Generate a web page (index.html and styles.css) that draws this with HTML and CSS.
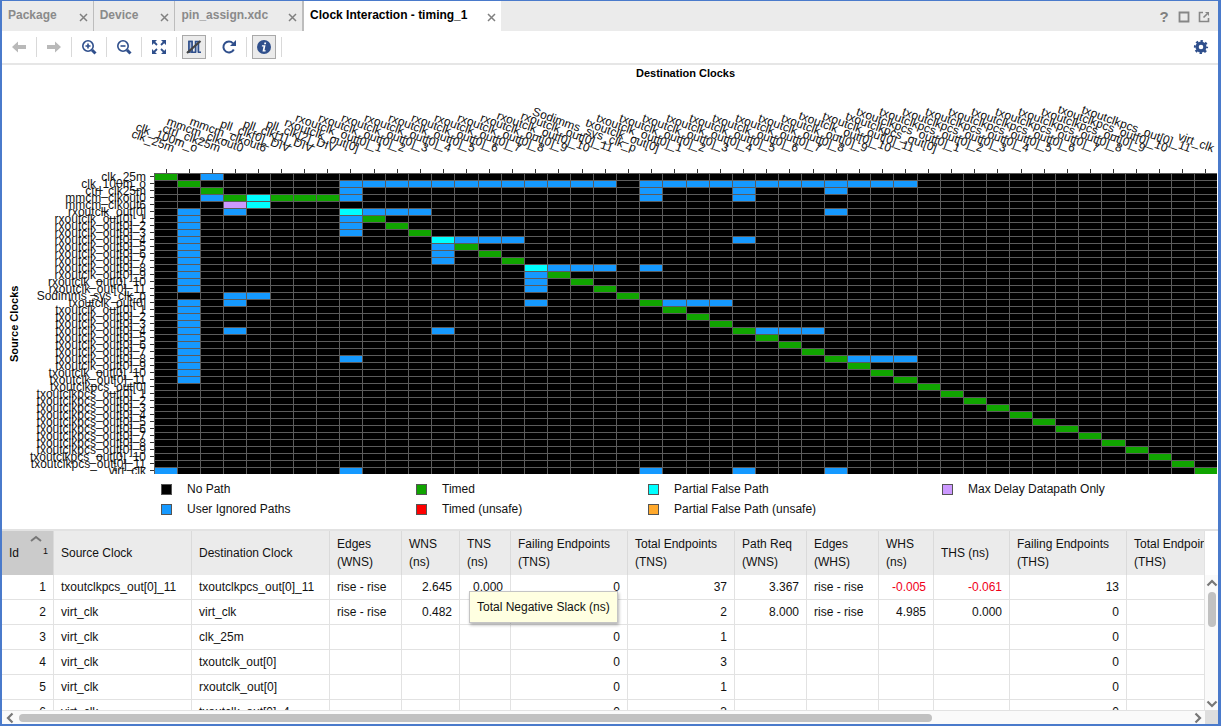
FILE: index.html
```html
<!DOCTYPE html>
<html lang="en">
<head>
<meta charset="utf-8">
<title>Clock Interaction - timing_1</title>
<link rel="stylesheet" href="styles.css">
</head>
<body>
<div class="app">
  <header class="tabbar">
    <nav class="tabs" aria-label="Views">
      <div class="tab"><button class="tab-name">Package</button><button class="tab-close" aria-label="Close Package"><svg viewBox="0 0 9 9"><path d="M1 1l7 7M8 1l-7 7"/></svg></button></div>
      <div class="tab"><button class="tab-name">Device</button><button class="tab-close" aria-label="Close Device"><svg viewBox="0 0 9 9"><path d="M1 1l7 7M8 1l-7 7"/></svg></button></div>
      <div class="tab"><button class="tab-name">pin_assign.xdc</button><button class="tab-close" aria-label="Close pin_assign.xdc"><svg viewBox="0 0 9 9"><path d="M1 1l7 7M8 1l-7 7"/></svg></button></div>
      <div class="tab tab-active"><button class="tab-name">Clock Interaction - timing_1</button><button class="tab-close" aria-label="Close Clock Interaction"><svg viewBox="0 0 9 9"><path d="M1 1l7 7M8 1l-7 7"/></svg></button></div>
    </nav>
    <div class="window-actions">
      <button class="help" aria-label="Help">?</button>
      <button aria-label="Maximize"><svg width="12" height="12" viewBox="0 0 12 12" fill="none" stroke="#868686" stroke-width="1.8"><path d="M1.500 1.500h9v9h-9z"/></svg></button>
      <button aria-label="Float"><svg width="12" height="12" viewBox="0 0 12 12" fill="none" stroke="#868686" stroke-width="1.6"><path d="M5 1.500H1.500v9h9V7M5.500 6.500L9 3"/><path d="M7 1h4v4z" fill="#868686" stroke="none"/></svg></button>
    </div>
  </header>

  <div class="toolbar" role="toolbar">
    <button class="tool" aria-label="Previous"><svg viewBox="0 0 24 24" fill="#b9b9b9"><path d="M5 12l6-5.500V10h8v4h-8v3.500z"/></svg></button>
    <span class="sep"></span>
    <button class="tool" aria-label="Next"><svg viewBox="0 0 24 24" fill="#b9b9b9"><path d="M19 12l-6-5.500V10H5v4h8v3.500z"/></svg></button>
    <span class="sep"></span>
    <button class="tool" aria-label="Zoom in"><svg viewBox="0 0 24 24" fill="none" stroke="#2f4f8c" stroke-width="1.6"><circle cx="11" cy="11" r="5.200"/><path d="M8.500 11h5M11 8.500v5"/><path d="M15 15l3.500 3.500" stroke-width="3"/></svg></button>
    <span class="sep"></span>
    <button class="tool" aria-label="Zoom out"><svg viewBox="0 0 24 24" fill="none" stroke="#2f4f8c" stroke-width="1.6"><circle cx="11" cy="11" r="5.200"/><path d="M8.500 11h5"/><path d="M15 15l3.500 3.500" stroke-width="3"/></svg></button>
    <span class="sep"></span>
    <button class="tool" aria-label="Zoom fit"><svg viewBox="0 0 24 24" fill="#2f4f8c" stroke="#2f4f8c" stroke-width="1.800"><path d="M7 7l3 3M17 7l-3 3M7 17l3-3M17 17l-3-3"/><path stroke="none" d="M5 5h5l-5 5zM19 5h-5l5 5zM5 19h5l-5-5zM19 19h-5l5-5z"/></svg></button>
    <span class="sep"></span>
    <button class="tool tool-on" aria-label="Hide unused clocks" aria-pressed="true"><svg viewBox="0 0 24 24" fill="#aebbd4" stroke="#2f4f8c" stroke-width="1.500"><path d="M5 17.300h2V6.500h3v10.800h3.500V6.500h3v10.800H19" /><path d="M7 17V6.500h3V17z"/><path d="M5 18L18.500 6" stroke="#444" stroke-width="2.200"/></svg></button>
    <span class="sep"></span>
    <button class="tool" aria-label="Refresh"><svg viewBox="0 0 24 24" fill="none" stroke="#2f4f8c" stroke-width="2"><path d="M16.800 14.500A5.500 5.500 0 1 1 16 8.300"/><path fill="#2f4f8c" stroke="none" d="M19 5v6h-6z"/></svg></button>
    <span class="sep"></span>
    <button class="tool tool-on" aria-label="Show legend" aria-pressed="true"><svg viewBox="0 0 24 24"><circle cx="12" cy="12" r="7" fill="#2f4f8c"/><path d="M12.400 7.500h1.800l-.3 1.800h-1.800zM10 10.300h3.500l-1 5h1.200l-.2 1.100h-3l1-5H9.800z" fill="#fff"/></svg></button>
    <span class="sep"></span>
    <button class="tool tool-settings" aria-label="Settings"><svg viewBox="0 0 24 24" fill="none" stroke="#2f4f8c"><circle cx="12" cy="12" r="3.900" stroke-width="3.200"/><circle cx="12" cy="12" r="6.100" stroke-width="2" stroke-dasharray="2.400 2.390" stroke-dashoffset="1.200"/></svg></button>
  </div>

  <main class="chart">
    <div class="chart-top">
      <h2 class="axis-title">Destination Clocks</h2>
      <div class="col-labels" id="colLabels"></div>
    </div>
    <div class="chart-body">
      <h2 class="axis-title-side">Source Clocks</h2>
      <div class="row-labels" id="rowLabels"></div>
      <div class="matrix" id="matrix"></div>
    </div>
    <ul class="legend">
      <li><span class="swatch none"></span>No Path</li>
      <li><span class="swatch timed"></span>Timed</li>
      <li><span class="swatch partial"></span>Partial False Path</li>
      <li><span class="swatch maxdelay"></span>Max Delay Datapath Only</li>
      <li><span class="swatch ignored"></span>User Ignored Paths</li>
      <li><span class="swatch unsafe"></span>Timed (unsafe)</li>
      <li><span class="swatch partial-unsafe"></span>Partial False Path (unsafe)</li>
    </ul>
  </main>

  <section class="results">
    <div class="table-wrap">
      <table>
        <colgroup><col class="w-id"><col class="w-clock"><col class="w-clock"><col class="w-mid"><col class="w-wns"><col class="w-tns"><col class="w-fail"><col class="w-total"><col class="w-mid"><col class="w-mid"><col class="w-whs"><col class="w-ths"><col class="w-fail"><col class="w-last"></colgroup>
        <thead>
          <tr>
            <th class="sorted"><div class="sort-head">Id<span class="sort"><svg width="12" height="7" viewBox="0 0 12 7" fill="none" stroke="#777" stroke-width="2"><path d="M1 6l5-4 5 4"/></svg><small>1</small></span></div></th>
            <th>Source Clock</th><th>Destination Clock</th><th>Edges<br>(WNS)</th><th>WNS<br>(ns)</th><th>TNS<br>(ns)</th><th>Failing Endpoints<br>(TNS)</th><th>Total Endpoints<br>(TNS)</th><th>Path Req<br>(WNS)</th><th>Edges<br>(WHS)</th><th>WHS<br>(ns)</th><th>THS (ns)</th><th>Failing Endpoints<br>(THS)</th><th>Total Endpoints<br>(THS)</th>
          </tr>
        </thead>
        <tbody>
          <tr><td class="num">1</td><td>txoutclkpcs_out[0]_11</td><td>txoutclkpcs_out[0]_11</td><td>rise - rise</td><td class="num">2.645</td><td class="num">0.000</td><td class="num">0</td><td class="num">37</td><td class="num">3.367</td><td>rise - rise</td><td class="num neg">-0.005</td><td class="num neg">-0.061</td><td class="num">13</td><td></td></tr>
          <tr><td class="num">2</td><td>virt_clk</td><td>virt_clk</td><td>rise - rise</td><td class="num">0.482</td><td></td><td></td><td class="num">2</td><td class="num">8.000</td><td>rise - rise</td><td class="num">4.985</td><td class="num">0.000</td><td class="num">0</td><td></td></tr>
          <tr><td class="num">3</td><td>virt_clk</td><td>clk_25m</td><td></td><td></td><td></td><td class="num">0</td><td class="num">1</td><td></td><td></td><td></td><td></td><td class="num">0</td><td></td></tr>
          <tr><td class="num">4</td><td>virt_clk</td><td>txoutclk_out[0]</td><td></td><td></td><td></td><td class="num">0</td><td class="num">3</td><td></td><td></td><td></td><td></td><td class="num">0</td><td></td></tr>
          <tr><td class="num">5</td><td>virt_clk</td><td>rxoutclk_out[0]</td><td></td><td></td><td></td><td class="num">0</td><td class="num">1</td><td></td><td></td><td></td><td></td><td class="num">0</td><td></td></tr>
          <tr><td class="num">6</td><td>virt_clk</td><td>txoutclk_out[0]_4</td><td></td><td></td><td></td><td class="num">0</td><td class="num">3</td><td></td><td></td><td></td><td></td><td class="num">0</td><td></td></tr>
        </tbody>
      </table>
    </div>
    <div class="vscroll">
      <svg width="12" height="8" viewBox="0 0 12 8" fill="none" stroke="#777" stroke-width="2.200"><path d="M1.500 6.500L6 2l4.500 4.500"/></svg>
      <div class="vtrack"><div class="vthumb"></div></div>
      <svg width="12" height="8" viewBox="0 0 12 8" fill="none" stroke="#777" stroke-width="2.200"><path d="M1.500 1.500L6 6l4.500-4.500"/></svg>
    </div>
    <div class="hscroll">
      <svg width="8" height="12" viewBox="0 0 8 12" fill="none" stroke="#777" stroke-width="2.200"><path d="M6.500 1.500L2 6l4.500 4.500"/></svg>
      <div class="htrack"><div class="hthumb"></div></div>
      <svg width="8" height="12" viewBox="0 0 8 12" fill="none" stroke="#777" stroke-width="2.200"><path d="M1.500 1.500L6 6l-4.500 4.500"/></svg>
    </div>
    <div class="corner"></div>
    <div class="tooltip" role="tooltip">Total Negative Slack (ns)</div>
  </section>
</div>
<script src="chart.js"></script>
</body>
</html>
```
FILE: styles.css
```css
* { box-sizing: border-box; }

body {
  margin: 0;
  background: #fff;
  color: #111;
  font: 12px/18px "Liberation Sans", Arial, sans-serif;
}

button {
  margin: 0;
  padding: 0;
  border: 0;
  background: none;
  font: inherit;
  color: inherit;
}

svg { display: block; }

.app {
  display: flex;
  flex-direction: column;
  height: 100vh;
  margin-right: 1px;
  border: solid #4a7acb;
  border-width: 1px 3px 2px 2px;
  overflow: hidden;
}

/* Tabs */
.tabbar {
  display: flex;
  justify-content: space-between;
  height: 30px;
  flex: none;
  background: #ebebeb;
}

.tabs { display: flex; }

.tab {
  display: flex;
  gap: 22px;
  padding: 0 5px 0 6px;
  border-right: 1px solid #bdbdbd;
  color: #8a8a8a;
  font-weight: bold;
}

.tab:nth-child(3) {
  gap: 20px;
  border-right-width: 2px;
}

.tab-active {
  gap: 20px;
  border-right: 0;
  background: #fff;
  color: #000;
}

.tab-name { height: 27px; }

.tab-close {
  width: 9px;
  padding-top: 3px;
}

.tab-close svg {
  width: 9px;
  height: 9px;
  stroke: #808080;
  stroke-width: 1.500;
}

.window-actions {
  display: flex;
  align-items: center;
  gap: 8px;
  padding: 2px 8px 0 0;
}

.help {
  width: 12px;
  color: #808080;
  font: bold 15px/18px "Liberation Sans", Arial, sans-serif;
}

/* Toolbar */
.toolbar {
  display: flex;
  align-items: center;
  gap: 5px;
  flex: none;
  height: 34px;
  padding: 0 5px;
  border-bottom: 2px solid #e6e6e6;
}

.tool {
  width: 24px;
  height: 24px;
  flex: none;
}

.tool svg { width: 24px; height: 24px; }

.tool-on {
  background: #ebebeb;
  border: 1px solid #a9a9a9;
}

.tool-on svg { margin: -1px; }

.tool-settings { margin-left: auto; }

.sep {
  width: 1px;
  height: 20px;
  background: #d9d9d9;
}

/* Chart */
.chart { flex: none; }

.chart-top { padding: 0 1px 0 152px; }

.axis-title,
.axis-title-side {
  margin: 0;
  color: #000;
  font-size: 11px;
  line-height: 16px;
  text-align: center;
}

.col-labels {
  display: grid;
  grid-template-columns: repeat(46, 1fr);
  height: 92px;
}

.col-label {
  position: relative;
  min-width: 0;
}

.col-label span {
  position: absolute;
  right: calc(50% - 6px);
  bottom: 18px;
  line-height: 14px;
  white-space: nowrap;
  transform: rotate(20deg);
  transform-origin: 100% 100%;
}

.col-label::after {
  content: "";
  position: absolute;
  left: 50%;
  bottom: 0;
  width: 1px;
  height: 4px;
  background: #333;
}

.chart-body {
  display: grid;
  grid-template-columns: 24px 128px 1fr;
  padding-right: 1px;
}

.axis-title-side {
  writing-mode: vertical-rl;
  transform: rotate(180deg);
  line-height: 24px;
}

/* The last label is cut at the matrix edge, the first may rise above it */
.row-labels { clip-path: inset(-8px 0 0 0); }

.row-label {
  display: flex;
  align-items: center;
  justify-content: flex-end;
  gap: 4px;
  height: 7px;
  line-height: 8px;
  white-space: nowrap;
}

.row-label::after {
  content: "";
  width: 4px;
  height: 1px;
  background: #333;
}

.matrix {
  display: grid;
  grid-template-columns: repeat(46, 1fr);
  grid-auto-rows: 7px;
}

.cell {
  border: solid #5c5c5c;
  border-width: 1px 0 0 1px;
}

.none { background: #000; }
.timed { background: #10a400; }
.ignored { background: #1599ff; }
.partial { background: #00ffff; }
.maxdelay { background: #cc99ff; }
.unsafe { background: #ff0000; }
.partial-unsafe { background: #ffa92c; }

.legend {
  display: grid;
  grid-template-columns: 255fr 232fr 294fr 276fr;
  margin: 0;
  padding: 5px 0 10px 159px;
  list-style: none;
}

.legend li {
  display: flex;
  align-items: center;
  gap: 15px;
  height: 20px;
}

.swatch {
  width: 11px;
  height: 11px;
  border: 1px solid #555;
}

/* Results table */
.results {
  position: relative;
  display: grid;
  grid-template-columns: 1fr 13px;
  grid-template-rows: 1fr 14px;
  flex: 1;
  min-height: 0;
  border-top: 2px solid #e2e2e2;
}

.table-wrap {
  min-width: 0;
  min-height: 0;
  overflow: hidden;
  border-right: 1px solid #e2e2e2;
}

table {
  width: 1256px;
  table-layout: fixed;
  border-collapse: separate;
  border-spacing: 0;
}

.w-id { width: 52px; }
.w-clock { width: 138px; }
.w-mid { width: 72px; }
.w-wns { width: 58px; }
.w-tns { width: 51px; }
.w-fail { width: 117px; }
.w-total { width: 107px; }
.w-whs { width: 55px; }
.w-ths { width: 76px; }
.w-last { width: 131px; }

th {
  height: 44px;
  padding: 0 0 1px 7px;
  border-right: 1px solid #dadada;
  background: #ebebeb;
  font-weight: normal;
  text-align: left;
  white-space: nowrap;
}

.sorted { background: #cbcbcb; }

.sort-head {
  display: flex;
  align-items: center;
  justify-content: space-between;
  padding-right: 5px;
}

.sort {
  display: flex;
  flex-direction: column;
  gap: 2px;
  width: 18px;
  padding-bottom: 12px;
}

.sort small {
  font-size: 9px;
  line-height: 14px;
  text-align: right;
}

td {
  height: 25px;
  padding: 0 7px;
  border: solid #e2e2e2;
  border-width: 0 1px 1px 0;
  white-space: nowrap;
}

.num { text-align: right; }
.neg { color: #f00018; }

.vscroll {
  display: flex;
  flex-direction: column;
  align-items: center;
  margin-top: 44px;
  padding: 4px 0 2px;
  background: #fafafa;
}

.vtrack {
  flex: 1;
  width: 8px;
  padding-top: 5px;
}

.vthumb {
  height: 32%;
  border-radius: 4px;
  background: #c1c1c1;
}

.hscroll {
  display: flex;
  align-items: center;
  padding: 0 3px 0 4px;
  border-top: 1px solid #e2e2e2;
  background: #fafafa;
}

.htrack {
  flex: 1;
  padding: 0 5px;
}

.hthumb {
  width: 78%;
  height: 8px;
  border-radius: 4px;
  background: #c1c1c1;
}

.corner { background: #dedede; }

.tooltip {
  position: absolute;
  left: 467px;
  top: 60px;
  padding: 6px 7px;
  border: 1px solid #c4c4c4;
  background: #ffffe1;
  box-shadow: 1px 2px 3px rgba(0, 0, 0, 0.3);
  white-space: nowrap;
}
```
FILE: chart.js
```js
const numbered = (name) => [name, ...Array.from({ length: 11 }, (_, i) => `${name}_${i + 1}`)];

const head = ["clk_25m", "clk_100m_o", "ctrl_clk25m", "mmcm_clkout0", "mmcm_clkout6"];
const tail = [
  ...numbered("rxoutclk_out[0]"),
  "Sodimms_sys_clk_p",
  ...numbered("txoutclk_out[0]"),
  ...numbered("txoutclkpcs_out[0]"),
  "virt_clk",
];
const destinations = [...head, "pll_clk[0]_DIV", "pll_clk[1]_DIV", "pll_clk[2]_DIV", ...tail];
const sources = [...head, ...tail];

const grid = sources.map(() => destinations.map(() => "none"));
const fill = (kind, row, first, last = first) => {
  for (let col = first; col <= last; col++) grid[row][col] = kind;
};

// Each clock is timed against itself
sources.forEach((name, row) => fill("timed", row, destinations.indexOf(name)));

// clk_100m_o ignores every transceiver clock, in both directions
fill("ignored", 1, 8, 19);
fill("ignored", 1, 21, 32);
for (let row = 5; row <= 29; row++) if (row !== 17) fill("ignored", row, 1);

fill("ignored", 0, 2);
[8, 21, 25, 29].forEach((col) => fill("ignored", 2, col));
[2, 8, 21, 25].forEach((col) => fill("ignored", 3, col));
fill("partial", 3, 4);
fill("timed", 3, 5, 7);
fill("maxdelay", 4, 3);
fill("partial", 4, 4);

// Receive clocks, in groups of four
[5, 9, 13].forEach((row) => {
  const col = row + 3;
  fill("partial", row, col);
  fill("ignored", row, col + 1, col + 3);
  for (let i = 1; i <= 3; i++) fill("ignored", row + i, col);
});

// Transmit clocks, in groups of four
[18, 22, 26].forEach((row) => fill("ignored", row, row + 4, row + 6));

[[5, 3], [5, 29], [9, 25], [13, 21], [17, 3], [17, 4], [18, 3], [18, 16], [22, 3], [22, 12], [26, 8],
  [42, 0], [42, 8], [42, 21], [42, 25], [42, 29]].forEach(([row, col]) => fill("ignored", row, col));

const add = (parent, className, text) => {
  const node = document.createElement("div");
  node.className = className;
  if (text) {
    const label = document.createElement("span");
    label.textContent = text;
    node.append(label);
  }
  parent.append(node);
};

destinations.forEach((name) => add(document.getElementById("colLabels"), "col-label", name));
sources.forEach((name) => add(document.getElementById("rowLabels"), "row-label", name));
grid.flat().forEach((kind) => add(document.getElementById("matrix"), `cell ${kind}`));
```
